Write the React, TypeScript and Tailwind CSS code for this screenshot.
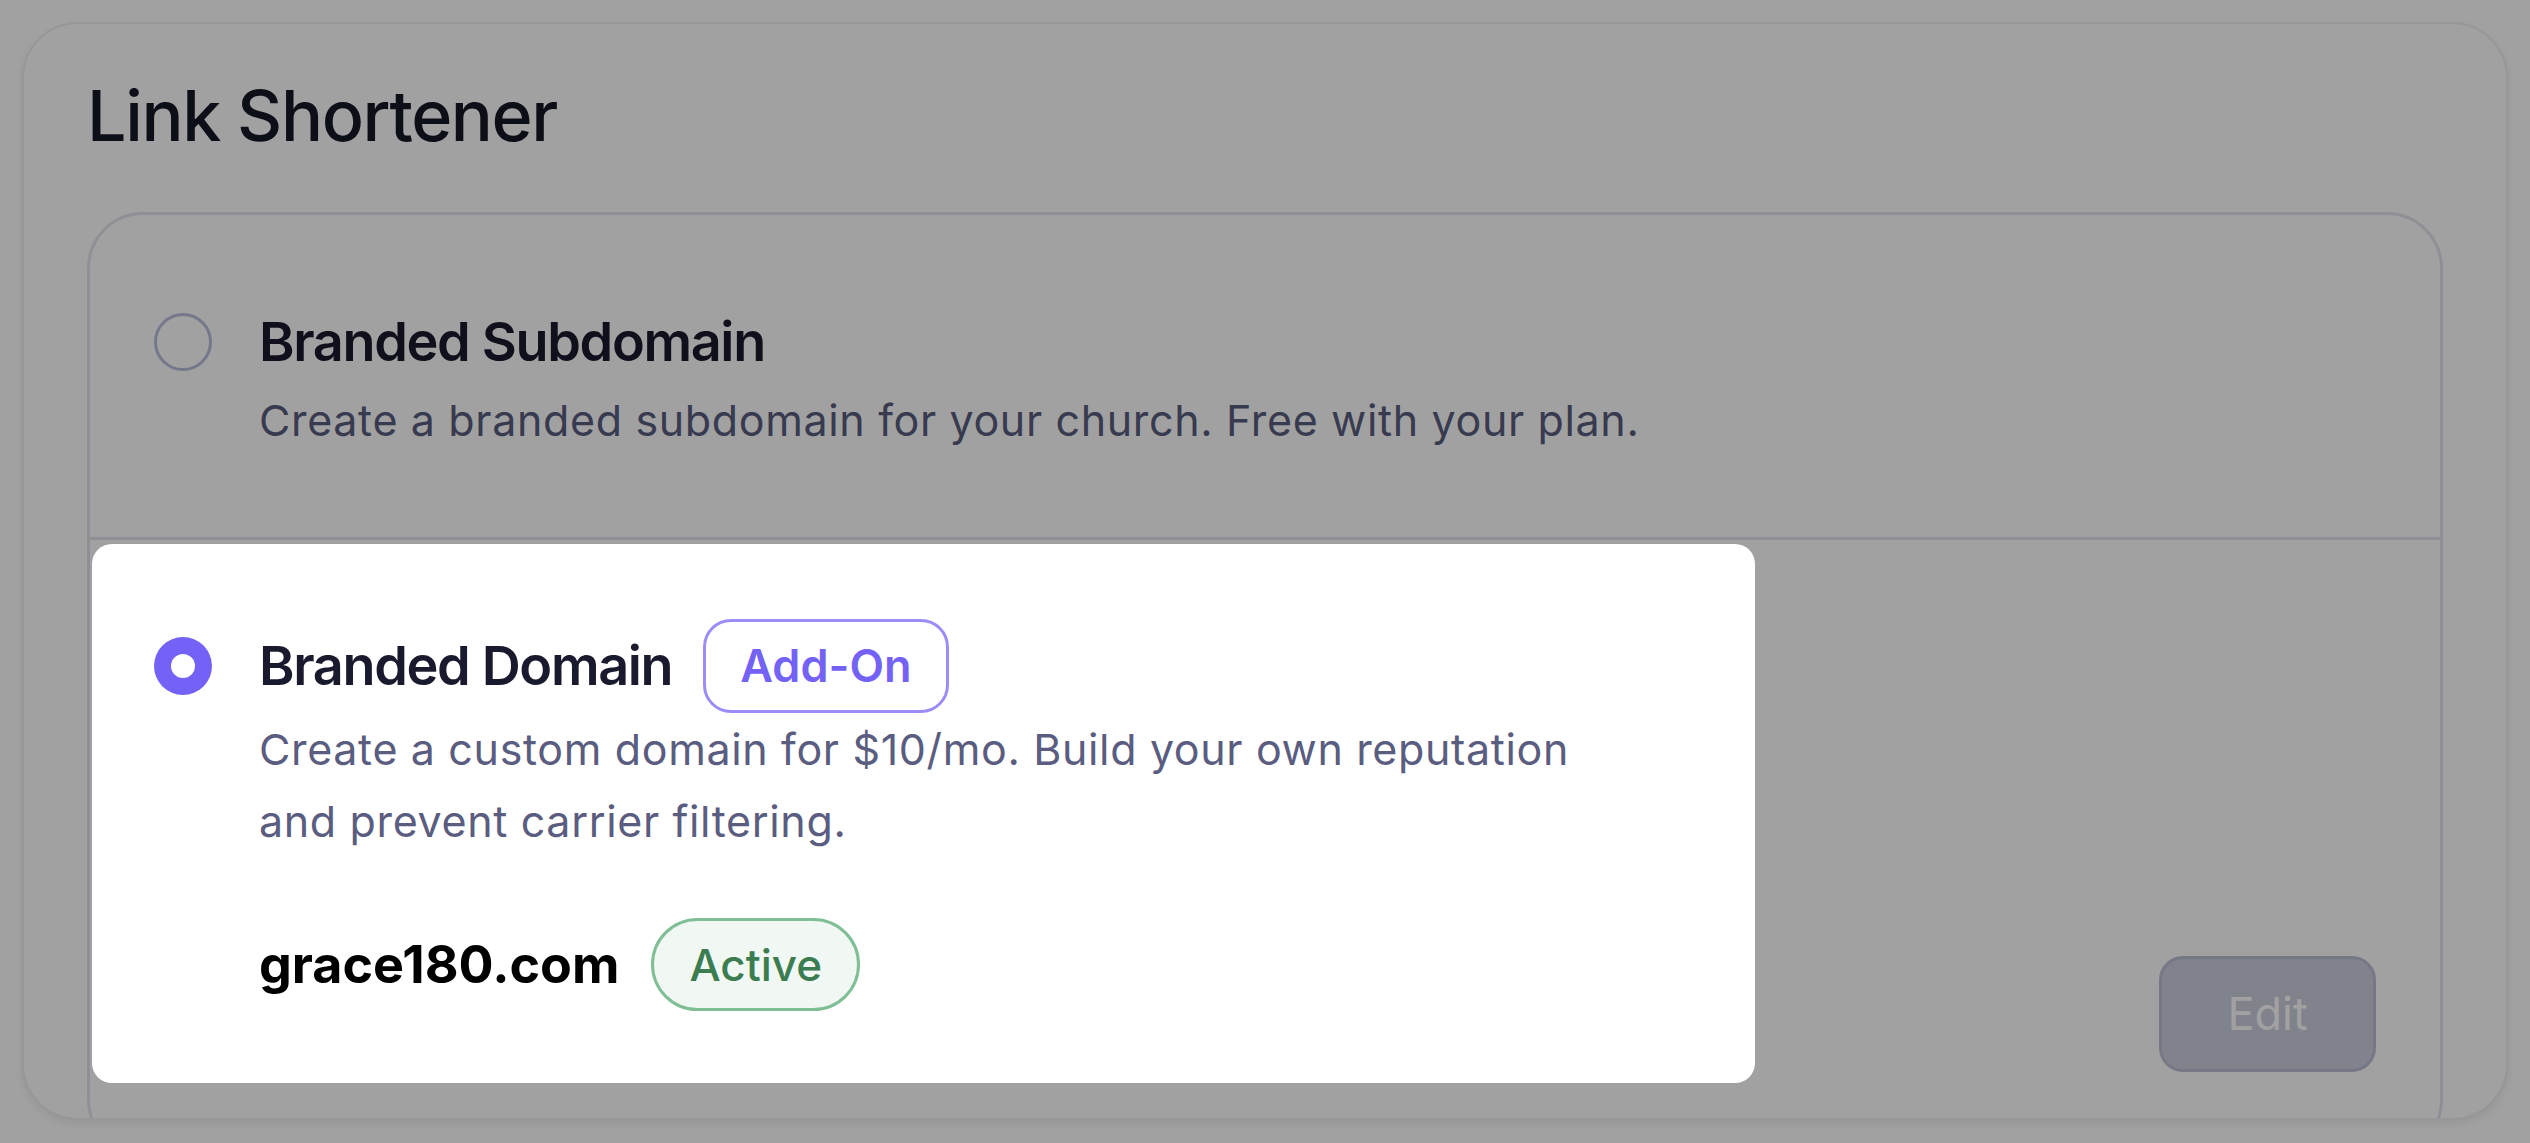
export default function App() {
  return (
    <div className="min-h-screen bg-white px-[22px] pt-[22px] font-['Inter',sans-serif]">
      <div className="h-[1098px] overflow-hidden rounded-[56px] border-2 border-[#efeff3] bg-white px-[63px] pt-[56px] shadow-[0_4px_8px_rgba(0,0,0,0.07)]">
        <h1 className="text-[70px] font-medium leading-[72px] tracking-[-0.02em] text-[#161826]">Link Shortener</h1>

        <div className="mt-[60px] rounded-[56px] border-[3px] border-[#e2e3ee]">
          {/* Option 1 */}
          <div className="border-b-[3px] border-[#e2e3ee] px-[64px] pb-[81px] pt-[85px]">
            <div className="grid grid-cols-[58px_1fr] gap-x-[47px]">
              <div className="h-[58px] w-[58px] self-center rounded-full border-[3px] border-[#b9bfdc]" />
              <div className="text-[54px] font-semibold leading-[84px] tracking-[-0.025em] text-[#1a1a2e]">Branded Subdomain</div>
              <div />
              <p className="text-[43px] leading-[72px] tracking-[0.015em] text-[#5a5d7f]">
                Create a branded subdomain for your church. Free with your plan.
              </p>
            </div>
          </div>

          {/* Option 2 */}
          <div className="flex items-end justify-between px-[64px] pb-[81px] pt-[79px]">
            <div className="mb-[61px] grid grid-cols-[58px_1fr] gap-x-[47px]">
              <div className="flex h-[58px] w-[58px] items-center justify-center self-center rounded-full bg-[#7461f5]">
                <div className="h-[24px] w-[24px] rounded-full bg-white" />
              </div>
              <div className="flex h-[94px] items-center gap-[31px]">
                <span className="text-[54px] font-semibold leading-[84px] tracking-[-0.025em] text-[#1a1a2e]">Branded Domain</span>
                <span className="flex h-[94px] items-center rounded-[28px] border-[3px] border-[#9b8df8] bg-white px-[34px] text-[45px] font-semibold text-[#7461f5]">
                  Add-On
                </span>
              </div>
              <div />
              <div>
                <p className="max-w-[1380px] text-[43px] leading-[72px] tracking-[0.015em] text-[#5a5d7f]">
                  Create a custom domain for $10/mo. Build your own reputation and prevent carrier filtering.
                </p>
                <div className="mt-[61px] flex h-[93px] items-center gap-[32px]">
                  <span className="text-[52px] font-bold text-black">grace180.com</span>
                  <span className="flex h-[93px] items-center rounded-full border-[3px] border-[#80bf96] bg-[#f1f7f3] px-[35px] text-[44px] font-medium text-[#3b7d50]">
                    Active
                  </span>
                </div>
              </div>
            </div>
            <button className="flex h-[116px] w-[217px] items-center justify-center rounded-[24px] border-[3px] border-[#bbbed5] bg-[#cbcede] text-[45px] text-white">
              Edit
            </button>
          </div>
        </div>
      </div>

      {/* Spotlight overlay */}
      <div className="pointer-events-none fixed left-[92px] top-[544px] h-[539px] w-[1663px] rounded-[20px] shadow-[0_0_0_3000px_rgba(0,0,0,0.37)]" />
    </div>
  );
}
